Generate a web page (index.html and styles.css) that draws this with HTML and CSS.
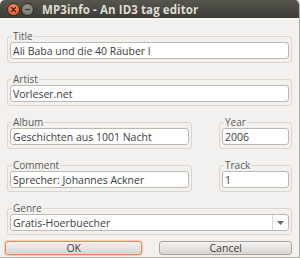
FILE: index.html
```html
<!DOCTYPE html>
<html lang="en">
<head>
    <meta charset="UTF-8">
    <title>MP3info - An ID3 tag editor</title>
    <link rel="stylesheet" href="styles.css">
</head>
<body>
    <div class="window">
        <!-- Barra de titulo -->
        <div class="titlebar">
            <span class="btn-close"><svg width="11" height="11" viewBox="0 0 11 11"><path d="M3.5 3.5 L7.5 7.5 M7.5 3.5 L3.5 7.5" stroke="#4a2012" stroke-width="1.4" stroke-linecap="round"/></svg></span>
            <span class="btn-min"><svg width="11" height="11" viewBox="0 0 11 11"><path d="M3.5 5.5 H7.5" stroke="#3c3b37" stroke-width="1.4" stroke-linecap="round"/></svg></span>
            <span class="title">MP3info - An ID3 tag editor</span>
        </div>

        <div class="content">
            <fieldset class="frame">
                <legend>Title</legend>
                <input type="text" value="Ali Baba und die 40 Räuber I">
            </fieldset>

            <fieldset class="frame">
                <legend>Artist</legend>
                <input type="text" value="Vorleser.net">
            </fieldset>

            <div class="row">
                <fieldset class="frame wide">
                    <legend>Album</legend>
                    <input type="text" value="Geschichten aus 1001 Nacht">
                </fieldset>
                <fieldset class="frame narrow">
                    <legend>Year</legend>
                    <input type="text" value="2006">
                </fieldset>
            </div>

            <div class="row">
                <fieldset class="frame wide">
                    <legend>Comment</legend>
                    <input type="text" value="Sprecher: Johannes Ackner">
                </fieldset>
                <fieldset class="frame narrow">
                    <legend>Track</legend>
                    <input type="text" value="1">
                </fieldset>
            </div>

            <fieldset class="frame">
                <legend>Genre</legend>
                <div class="combo">
                    <span class="combo-text">Gratis-Hoerbuecher</span>
                    <span class="combo-btn"><svg width="7" height="4" viewBox="0 0 7 4"><path d="M0 0 H7 L3.5 4 Z" fill="#6d6a64"/></svg></span>
                </div>
            </fieldset>

            <div class="buttons">
                <button class="ok">OK</button>
                <button class="cancel">Cancel</button>
            </div>
        </div>
    </div>
</body>
</html>
```

FILE: styles.css
```css
body {
    margin: 0;
    background-color: #f2f1f0;
    font-family: "Open Sans", "DejaVu Sans", sans-serif;
    font-size: 10px;
    color: #3c3c3c;
}

.window {
    width: 299px;
    height: 257px;
    background-color: #f2f1f0;
    border-right: 1px solid #b3b0aa;
    border-bottom: 1px solid #b3b0aa;
    border-radius: 5px 5px 0 0;
    overflow: hidden;
}

/* Barra de titulo */
.titlebar {
    height: 18px;
    background: linear-gradient(#57564f, #3c3b37);
    display: flex;
    align-items: center;
    padding-left: 7px;
}

.btn-close, .btn-min {
    width: 11px;
    height: 11px;
    border-radius: 50%;
    display: flex;
}

.btn-close {
    background: radial-gradient(circle at 50% 35%, #f8926a, #df4d1e);
    border: 0.5px solid #3a2a22;
}

.btn-min {
    margin-left: 1px;
    background: radial-gradient(circle at 50% 35%, #9c9a94, #6f6e69);
    border: 0.5px solid #2c2b28;
}

.title {
    margin-left: 8px;
    color: #dfdbd2;
    font-weight: bold;
    font-size: 11.5px;
    letter-spacing: 0.1px;
}

/* Contenido */
.content {
    padding: 12px 7px 0 7px;
}

.frame {
    margin: 0 0 10px 0;
    padding: 0 2px 3px 2px;
    border: 1px solid #dad7d2;
    border-radius: 3px;
    min-width: 0;
}

.frame legend {
    padding: 0 1px;
    margin-left: 2px;
    line-height: 12px;
    font-size: 10px;
    color: #5b5a57;
}

.row {
    display: flex;
    gap: 27px;
}

.wide {
    flex: 1;
}

.narrow {
    width: 67px;
    flex: none;
}

input[type="text"], .combo {
    display: block;
    box-sizing: border-box;
    width: 100%;
    height: 17px;
    margin: 0;
    padding: 0 2px;
    border: 1px solid #bdb8b0;
    border-radius: 3px;
    background-color: #ffffff;
    font-family: inherit;
    font-size: 10.5px;
    color: #3c3c3c;
    outline: none;
}

.combo {
    display: flex;
    align-items: center;
    padding-right: 0;
}

.combo-text {
    flex: 1;
}

.combo-btn {
    width: 15px;
    height: 100%;
    border-left: 1px solid #dedbd6;
    display: flex;
    align-items: center;
    justify-content: center;
}

/* Botones */
.buttons {
    display: flex;
    margin: -4px 0 0 -2px;
}

button {
    box-sizing: border-box;
    height: 14px;
    padding: 0;
    border: 1px solid #a7a39c;
    border-radius: 3px;
    background: linear-gradient(#f4f3f2, #d9d6d1);
    font-family: inherit;
    font-size: 10.5px;
    line-height: 12px;
    color: #3c3c3c;
}

button.ok {
    width: 139px;
    border-color: #e9875c;
    box-shadow: 0 0 0 1px #f7cdb8;
}

button.cancel {
    width: 134px;
    margin-left: 17px;
}
```
